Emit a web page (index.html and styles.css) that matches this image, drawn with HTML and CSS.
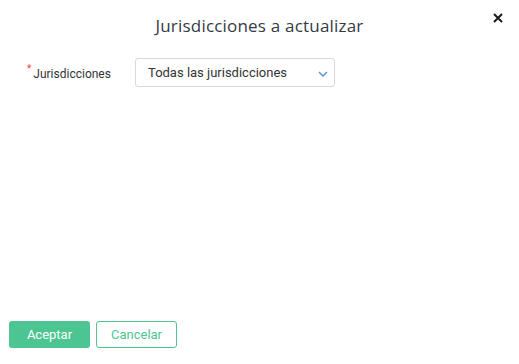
FILE: index.html
```html
<!DOCTYPE html>
<html>
	<head>
		<meta charset="UTF-8">
		<title>Jurisdicciones a actualizar</title>
		<link rel="stylesheet" href="styles.css">
	</head>
	<body>
		<div class="modal">
			<div class="modal-head">
				<h3 class="modal-title">Jurisdicciones a actualizar</h3>
				<a href="javascript:;" class="close">
					<svg width="10" height="10" viewBox="0 0 10 10"><path d="M1 1L9 9M9 1L1 9" stroke="#1a1a1a" stroke-width="2"/></svg>
				</a>
			</div>
			<div class="modal-body">
				<div class="form-row">
					<label class="label"><span class="req">*</span>Jurisdicciones</label>
					<div class="select">
						<span>Todas las jurisdicciones</span>
						<svg width="10" height="6" viewBox="0 0 10 6"><path d="M1 1L5 5L9 1" fill="none" stroke="#4a90d9" stroke-width="1.3"/></svg>
					</div>
				</div>
			</div>
			<div class="modal-foot">
				<a href="javascript:;" class="btn btn-primary">Aceptar</a>
				<a href="javascript:;" class="btn btn-outline">Cancelar</a>
			</div>
		</div>
	</body>
</html>
```

FILE: styles.css
```css
body{
	margin: 0;
	background: #fff;
	font-family: Roboto, "Liberation Sans", sans-serif;
}
.modal{
	height: 364px;
	display: flex;
	flex-direction: column;
	box-sizing: border-box;
}
.modal-head{
	height: 50px;
	display: flex;
	align-items: center;
	justify-content: center;
	position: relative;
}
.modal-title{
	margin: 0;
	font-family: "Open Sans", sans-serif;
	font-weight: 400;
	font-size: 17px;
	color: #333a44;
	letter-spacing: 0.2px;
}
.close{
	position: absolute;
	right: 16px;
	top: 13px;
	display: flex;
}
.modal-body{
	flex: 1;
	padding: 8px 0 0 27px;
}
.form-row{
	display: flex;
	align-items: center;
}
.label{
	width: 108px;
	font-size: 12px;
	color: #333;
	position: relative;
	top: 1px;
}
.req{
	color: #f04134;
	font-size: 10px;
	position: relative;
	top: -6px;
	margin-right: 2px;
}
.select{
	width: 200px;
	height: 29px;
	box-sizing: border-box;
	border: 1px solid #d9d9d9;
	border-radius: 3px;
	display: flex;
	align-items: center;
	justify-content: space-between;
	padding: 0 6px 0 12px;
	font-size: 13px;
	color: #333;
}
.select svg{
	position: relative;
	top: 1px;
}
.modal-foot{
	display: flex;
	gap: 6px;
	padding: 0 0 16px 9px;
}
.btn{
	display: block;
	width: 81px;
	height: 27px;
	line-height: 27px;
	box-sizing: border-box;
	text-align: center;
	text-decoration: none;
	font-size: 13px;
	border-radius: 3px;
}
.btn-primary{
	background: #4cc593;
	color: #fff;
}
.btn-outline{
	border: 1px solid #4cc593;
	line-height: 25px;
	color: #4cc593;
}
```
